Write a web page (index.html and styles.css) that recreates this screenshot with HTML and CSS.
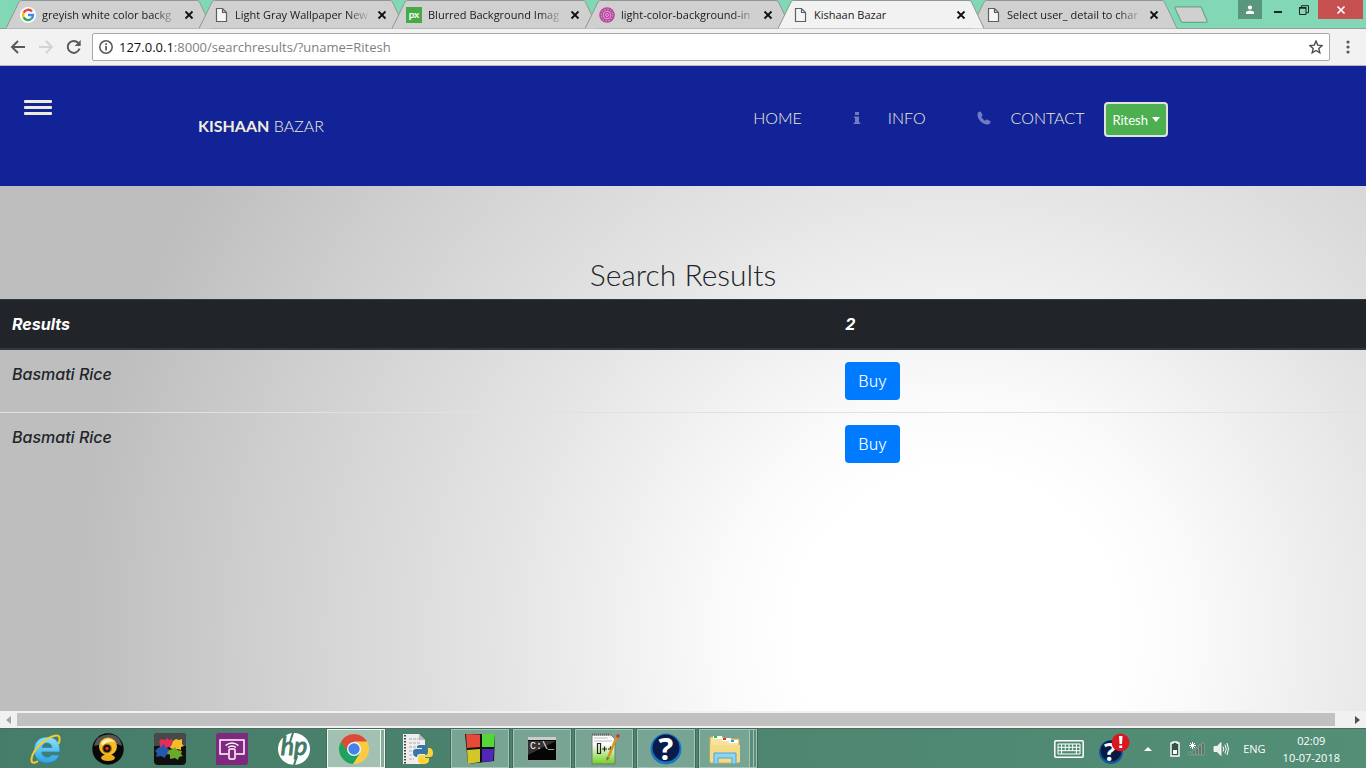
FILE: index.html
```html
<!DOCTYPE html>
<html lang="en">
<head>
<meta charset="utf-8">
<title>Kishaan Bazar</title>
<link rel="stylesheet" href="styles.css">
</head>
<body>
<svg class="defs" width="0" height="0" aria-hidden="true">
  <symbol id="tab-shape" viewBox="0 0 206 29"><path d="M0 28.5 13 2Q14 .5 15.500 .5H191Q192.500 .5 193.500 2L206 28.500" /></symbol>
  <symbol id="close" viewBox="0 0 10 10"><path d="m1.500 1.500 7 7m0-7-7 7" fill="none" stroke="currentColor" stroke-width="1.800"/></symbol>
  <symbol id="page" viewBox="0 0 16 16"><path d="M3.500 1.500h6l4 4v9h-10zM9.500 1.500v4h4" fill="#f5f5f5" stroke="#5f5f5f" stroke-width="1.200"/></symbol>
</svg>

<div class="tabstrip">
  <ul class="tabs">
    <li class="tab">
      <svg class="shape"><use href="#tab-shape"/></svg>
      <svg class="favicon" viewBox="0 0 16 16"><circle cx="8" cy="8" r="8" fill="#fff"/><g fill="none" stroke-width="2.400"><path d="M12 4.500A5 5 0 0 0 3.600 5.800" stroke="#ea4335"/><path d="M3.600 5.800a5 5 0 0 0 0 4.600" stroke="#fbbc05"/><path d="M3.600 10.400a5 5 0 0 0 7.600 1.500" stroke="#34a853"/><path d="M11.200 11.900A5 5 0 0 0 13 8H8" stroke="#4285f4"/></g></svg>
      <span class="title">greyish white color backg</span>
      <button class="close" aria-label="Close tab"><svg><use href="#close"/></svg></button>
    </li>
    <li class="tab">
      <svg class="shape"><use href="#tab-shape"/></svg>
      <svg class="favicon"><use href="#page"/></svg>
      <span class="title">Light Gray Wallpaper New</span>
      <button class="close" aria-label="Close tab"><svg><use href="#close"/></svg></button>
    </li>
    <li class="tab">
      <svg class="shape"><use href="#tab-shape"/></svg>
      <svg class="favicon" viewBox="0 0 16 16"><path fill="#48a947" d="M0 0h16v16H0z"/><text x="8" y="11" text-anchor="middle" class="px">px</text></svg>
      <span class="title">Blurred Background Imag</span>
      <button class="close" aria-label="Close tab"><svg><use href="#close"/></svg></button>
    </li>
    <li class="tab">
      <svg class="shape"><use href="#tab-shape"/></svg>
      <svg class="favicon" viewBox="0 0 16 16"><circle cx="8" cy="8" r="7.800" fill="#b8489f"/><g fill="none" stroke="#e9b9de"><circle cx="8" cy="8" r="5.800" stroke-dasharray="1.500 1.500" stroke-width=".8"/><circle cx="8" cy="8" r="3.800" stroke-width=".8"/><circle cx="8" cy="8" r="1.500" stroke-width=".8"/></g></svg>
      <span class="title">light-color-background-in</span>
      <button class="close" aria-label="Close tab"><svg><use href="#close"/></svg></button>
    </li>
    <li class="tab active">
      <svg class="shape"><use href="#tab-shape"/></svg>
      <svg class="favicon"><use href="#page"/></svg>
      <span class="title">Kishaan Bazar</span>
      <button class="close" aria-label="Close tab"><svg><use href="#close"/></svg></button>
    </li>
    <li class="tab">
      <svg class="shape"><use href="#tab-shape"/></svg>
      <svg class="favicon"><use href="#page"/></svg>
      <span class="title">Select user_ detail to char</span>
      <button class="close" aria-label="Close tab"><svg><use href="#close"/></svg></button>
    </li>
  </ul>
  <button class="newtab" aria-label="New tab"><svg width="36" height="18" viewBox="0 0 36 18"><path d="M3 .8h24q1 0 1.500 1l5.500 13q.5 1.500-1 1.500H9.500q-1 0-1.500-1L2 2Q1.500.8 3 .8z" fill="#d0d0d0" stroke="#6aa78c" stroke-width="1.200"/></svg></button>
  <div class="window-buttons">
    <button class="profile" aria-label="Profile"><svg width="10" height="10" viewBox="0 0 10 10"><circle cx="5" cy="2.500" r="2.100" fill="#fff"/><path d="M1 9V7q1-1.500 4-1.500T9 7v2z" fill="#fff"/></svg></button>
    <button class="minimize" aria-label="Minimize"><svg width="10" height="10" viewBox="0 0 10 10"><path d="M1 6h8v2H1z" fill="#222"/></svg></button>
    <button class="restore" aria-label="Restore"><svg width="10" height="10" viewBox="0 0 10 10"><path d="M.5 3h6.500v6.500H.5zM2.500 3V.7h7v7H7" fill="none" stroke="#222"/><path d="M0 2h7.500v1.500H0z" fill="#222"/></svg></button>
    <button class="quit" aria-label="Close"><svg width="10" height="10" viewBox="0 0 10 10"><path d="m1.500 1.500 7 7m0-7-7 7" stroke="#fff" stroke-width="1.700"/></svg></button>
  </div>
</div>

<div class="toolbar">
  <button aria-label="Back"><svg width="16" height="16" viewBox="0 0 16 16"><path d="M15 8H2.500M8 2 2 8l6 6" fill="none" stroke="#5a5a5a" stroke-width="2"/></svg></button>
  <button aria-label="Forward"><svg width="16" height="16" viewBox="0 0 16 16"><path d="M1 8h12.500M8 2l6 6-6 6" fill="none" stroke="#d3d3d3" stroke-width="2"/></svg></button>
  <button aria-label="Reload"><svg width="16" height="16" viewBox="0 0 16 16"><path d="M13.500 9.500A6 6 0 1 1 12.300 4" fill="none" stroke="#5a5a5a" stroke-width="2"/><path d="M14.700 1v6H8.700z" fill="#5a5a5a"/></svg></button>
  <div class="omnibox">
    <svg width="14" height="14" viewBox="0 0 14 14"><circle cx="7" cy="7" r="6.200" fill="none" stroke="#555" stroke-width="1.500"/><path d="M6.200 6h1.700v4.500H6.200zM6.200 3.200h1.700v1.700H6.200z" fill="#555"/></svg>
    <a class="url" href="#"><span class="host">127.0.0.1</span>:8000/searchresults/?uname=Ritesh</a>
    <button aria-label="Bookmark"><svg width="14" height="14" viewBox="0 0 14 14"><path d="m7 1 1.700 4.100 4.400.4-3.300 3 1 4.300L7 10.500l-3.800 2.300 1-4.300-3.300-3 4.400-.4z" fill="none" stroke="#4d4d4d" stroke-width="1.400"/></svg></button>
  </div>
  <button class="menu" aria-label="Menu"><svg width="4" height="14" viewBox="0 0 4 14"><g fill="#5a5a5a"><circle cx="2" cy="2" r="1.600"/><circle cx="2" cy="7" r="1.600"/><circle cx="2" cy="12" r="1.600"/></g></svg></button>
</div>

<div class="site">
  <header class="site-header">
    <button class="burger" aria-label="Open navigation"><span></span><span></span><span></span></button>
    <a class="brand" href="#"><b>KISHAAN</b> BAZAR</a>
    <nav class="nav">
      <a class="home" href="#">HOME</a>
      <a class="info" href="#"><svg width="8" height="14" viewBox="0 0 8 14"><path d="M2 1h4v3H2zM1 5.500h5v6h1.300V13H.7v-1.500H2V7H1z"/></svg>INFO</a>
      <a class="contact" href="#"><svg width="14" height="14" viewBox="0 0 14 14"><path d="M3.700.5 5.700 4.300 4.300 6q1.500 2.500 3.700 3.700l1.700-1.400 3.800 2Q13.500 13.600 10.300 13.500C5 13 .7 8.500.5 3.700Q.5.600 3.700.5z"/></svg>CONTACT</a>
      <button class="user">Ritesh <svg width="8" height="5" viewBox="0 0 8 5"><path d="M0 0h8L4 5z" fill="#fff"/></svg></button>
    </nav>
  </header>
  <main class="content">
    <h1>Search Results</h1>
    <table class="results">
      <thead><tr><th scope="col">Results</th><th scope="col">2</th></tr></thead>
      <tbody>
        <tr><td>Basmati Rice</td><td><button class="buy">Buy</button></td></tr>
        <tr><td>Basmati Rice</td><td><button class="buy">Buy</button></td></tr>
      </tbody>
    </table>
  </main>
</div>

<div class="scrollbar">
  <button aria-label="Scroll left"><svg width="5" height="8" viewBox="0 0 5 8"><path d="M5 0v8L0 4z" fill="#a3a3a3"/></svg></button>
  <div class="thumb"></div>
  <button aria-label="Scroll right"><svg width="5" height="8" viewBox="0 0 5 8"><path d="M0 0v8l5-4z" fill="#505050"/></svg></button>
</div>

<footer class="taskbar">
  <div class="apps">
    <button aria-label="Internet Explorer"><svg viewBox="0 0 32 32">
      <defs><linearGradient id="ie" x2="0" y2="1"><stop stop-color="#8fe3fb"/><stop offset="1" stop-color="#2ba3e2"/></linearGradient></defs>
      <path d="M17 4C8.500 4 4 10 4 17s5 13 13 13c6 0 10.500-3 12-8h-7.500c-1 1.500-2.500 2.200-4.500 2.200-3.200 0-5-2-5.200-5.200h18C30.500 9 25.500 4 17 4zm-5 10.500c.5-3 2.300-4.500 5-4.500s4.500 1.500 5 4.500z" fill="url(#ie)" stroke="#2384bd" stroke-width=".7"/>
      <path d="M28.500 11c2-5 1.500-9-2.500-8.500C16 4 3 16 1.500 26c-.5 4.500 3 4.500 6.500 2" fill="none" stroke="#f6cc2b" stroke-width="2"/></svg></button>
    <button aria-label="Webcam"><svg viewBox="0 0 32 32"><circle cx="16" cy="16" r="15.700" fill="#080808"/><path d="M2 13Q4 2 16 1.500T30 13Q22 8 2 13z" fill="#555"/><path d="M9 25q0-2 3-3h8q3 1 3 3-1 3-7 3t-7-3z" fill="#efad17"/><circle cx="16" cy="13.500" r="9" fill="#f6bd28"/><path d="M9 10q6-8 14-1-7-2-12 5z" fill="#fff0a8"/><circle cx="15" cy="15.500" r="5" fill="#a47a18"/><circle cx="15" cy="15.500" r="3.700" fill="#111"/><circle cx="15" cy="15.500" r="1.700" fill="#ff2c16"/></svg></button>
    <button aria-label="Puzzle"><svg viewBox="0 0 32 32"><rect width="32" height="32" rx="4" fill="#101010"/><path d="M0 13V4q0-4 4-4h24q4 0 4 4v9z" fill="#484848"/><path d="m7 6 4 1 2-2 2 2 3-1 1 4-2 1 1 4-4-1-2 2-2-2-4 1V11L5 9z" fill="#e52d58"/><path d="m19 8 3-2 3 1 3-1v5l2 2-3 1v3l-4-1-2 2-2-2-3-1 2-4z" fill="#f3bc28"/><path d="m4 15 4-2 2-2 2 4 3 1-1 3 2 2-4 1-1 3-4-2-5 1 1-4-2-2z" fill="#2657ad"/><path d="m15 17 4-1 2-2 2 3 5 1-1 3 2 2-4 1-1 3-3-2-5 1v-4l-3-2z" fill="#69aa2b"/></svg></button>
    <button aria-label="Cast"><svg viewBox="0 0 32 32"><path d="M3 0h29v29q0 3-3 3H0V3q0-3 3-3z" fill="#80277f"/><g fill="none" stroke="#fff" stroke-width="1.500"><path d="M12 21H4V7h24v14h-8"/><rect x="13" y="16" width="6" height="10" rx="1"/><path d="M9.500 12.500q6.500-5 13 0M12 14.500q4-3 8 0"/></g></svg></button>
    <button aria-label="HP"><svg viewBox="0 0 32 32"><circle cx="16" cy="16" r="16" fill="#fff"/><text x="16" y="22" text-anchor="middle" class="hp">hp</text><path d="m15 0-3 9M16 32l3-9" stroke="#417b68" stroke-width="2"/></svg></button>
    <button class="open current" aria-label="Chrome"><svg viewBox="0 0 32 32"><circle cx="16" cy="16" r="15" fill="#fbcc43"/><path d="M3 8.500a15 15 0 0 1 26 0H16L9 19z" fill="#d94b3c"/><path d="M3 8.500A15 15 0 0 0 15 31l7-11-12-1z" fill="#1ca261"/><circle cx="16" cy="16" r="7" fill="#f8f8f8"/><circle cx="16" cy="16" r="5.700" fill="#4283eb"/></svg></button>
    <button aria-label="Python"><svg viewBox="0 0 32 32"><path d="M1 1h16l6 6v24H1z" fill="#eee"/><path d="M17 1v6h6z" fill="#bbb"/><path d="M3 2v29" stroke="#444" stroke-width="2" stroke-dasharray="1.500 1.500"/><path d="M7 6h10M7 10h12M7 14h10M7 18h5M7 22h5M7 26h5" stroke="#aaa" stroke-dasharray="3 1"/><path d="M17 12h5q3 0 3 3v4q0 2-3 2h-4q-3 0-3 3h-1q-3-1-3-5 0-3 3-3h6v-1h-5v-2z" fill="#3776ab"/><path d="M26 15h2q3 1 3 5 0 4-3 4h-6v1h5v3q-1 3-5 3-6 0-6-3v-3q0-3 3-3h4q3 0 3-3z" fill="#ffd43b"/></svg></button>
    <button class="open" aria-label="Color blocks"><svg viewBox="0 0 32 32"><path d="m1 1 30 0-1 27-26 3z" fill="#111"/><path d="m2 1 14 .5V14L3 15z" fill="#e54a3a"/><path d="M18 1h13l-1 13H18z" fill="#55d638"/><path d="m3 17 13-1v13L4 31z" fill="#d2c72a"/><path d="M18 16h12l-1 12-11 1z" fill="#5127ba"/></svg></button>
    <button class="open" aria-label="Command Prompt"><svg viewBox="0 0 32 32"><path d="M1.500 4.500h29v23h-29z" fill="#050505" stroke="#999"/><path d="M2 4h28v3H2z" fill="#ccc"/><path d="M2 8h28L2 22z" fill="#333"/><text x="4" y="16" class="cmd">C:\_</text></svg></button>
    <button class="open" aria-label="Notepad++"><svg viewBox="0 0 32 32"><defs><linearGradient id="np" x2="0" y2="1"><stop offset=".3" stop-color="#fff"/><stop offset="1" stop-color="#72cf22"/></linearGradient></defs><path d="M4 2h19l4 4v25H4z" fill="url(#np)" stroke="#777"/><path d="M6 5h14M6 8h18" stroke="#bbb"/><path d="M4 1.500h18" stroke="#666" stroke-width="2" stroke-dasharray="1 1"/><path d="M9.500 10.500h3v10h-3zM14 16h5m-2.500-2.500v5m3.500-2.500h5m-2.500-2.500v5" fill="none" stroke="#222" stroke-width="1.200"/><path d="m29 3-9 22" stroke="#d89522" stroke-width="2.500"/><path d="m29 1 3 1-1 3-3-1z" fill="#c33"/><path d="m18.500 24 3 1-3 3z" fill="#864"/></svg></button>
    <button class="open" aria-label="Help"><svg viewBox="0 0 32 32"><circle cx="16" cy="16" r="15.500" fill="#1676c6"/><circle cx="16" cy="15" r="13.500" fill="#081b49"/><text x="16" y="27" text-anchor="middle" class="question">?</text></svg></button>
    <button class="open stack" aria-label="File Explorer"><svg viewBox="0 0 32 32"><path d="M1 4h13l2 2h14v24H1z" fill="#f8e39c" stroke="#d1ab4e"/><path d="M4 3h9v3H4zM13 5h9v3h-9zM20 7h9v3h-9z" fill="#fff"/><path d="M5 3h3v2H5z" fill="#2c3"/><path d="M14 5h3v2h-3z" fill="#d33"/><path d="M22 7h3v2h-3z" fill="#29e"/><path d="M1 12h30v17H1z" fill="#f5db85"/><path d="M5 31V20h22v11h-4v-6H9v6z" fill="#8fd2f1" stroke="#4aa7d5"/></svg></button>
  </div>
  <div class="tray">
    <svg width="30" height="18" viewBox="0 0 30 18"><rect x=".8" y=".8" width="28.400" height="16.400" rx="1" fill="none" stroke="#fff" stroke-width="1.500"/><path d="M4 4h22v10H4zM4 7.300h22M4 10.700h22M7.600 4v10M11.300 4v6.700M15 4v6.700M18.700 4v6.700M22.400 4v10" fill="none" stroke="#fff"/></svg>
    <svg width="32" height="32" viewBox="0 0 32 32"><circle cx="13" cy="19" r="12" fill="#14599f"/><circle cx="13" cy="18" r="10.500" fill="#071b43"/><text x="12" y="28" text-anchor="middle" class="help-small">?</text><circle cx="22.500" cy="9.500" r="9" fill="#d91820"/><path d="M21 3h3.500l-.5 8h-2.500zM21.200 12.500h3V15h-3z" fill="#fff"/></svg>
    <svg width="8" height="4" viewBox="0 0 8 4"><path d="m4 0 4 4H0z" fill="#fff"/></svg>
    <div class="status">
      <svg width="10" height="16" viewBox="0 0 10 16"><path d="M3 2V1h4v1h2v13H1V2z" fill="#315649" stroke="#fff" stroke-width="1.400"/><path d="M3 9h4v4H3z" fill="#fff"/></svg>
      <svg width="17" height="15" viewBox="0 0 17 15"><path d="M1 14v-3h2v3zm4 0V9h2v5zm3 0V7h2v7zm3 0V4h2v10zm3 0V2h2v12z" fill="#44594f" stroke="#b9c9c0" stroke-width=".5"/><path d="M4.500 1v7M1 4.500h7M2 2l5 5m0-5L2 7" stroke="#fff"/></svg>
      <svg width="16" height="16" viewBox="0 0 16 16"><path d="M1 5.500h3l4-4v13l-4-4H1z" fill="#e8f0ec" stroke="#fff" stroke-width=".8"/><path d="M10 5.500q1.500 2.500 0 5M12 3.500q2.500 4.500 0 9M14 2q3 6 0 12" fill="none" stroke="#fff"/></svg>
    </div>
    <span>ENG</span>
    <time class="clock" datetime="2018-07-10T02:09">02:09<br>10-07-2018</time>
  </div>
</footer>
</body>
</html>
```
FILE: styles.css
```css
* { box-sizing: border-box; }

body {
  margin: 0;
  min-height: 100vh;
  display: flex;
  flex-direction: column;
  font-family: "Open Sans", "Noto Sans", sans-serif;
}

button {
  margin: 0;
  padding: 0;
  border: 0;
  background: none;
  font: inherit;
  color: inherit;
  cursor: pointer;
}

a { text-decoration: none; }
svg { display: block; flex: none; }
.defs { position: absolute; }

/* Tab strip */
.tabstrip {
  display: flex;
  height: 29px;
  padding-left: 6px;
  background: #82d8b5;
  border-bottom: 1px solid #969e9a;
}

.tabs {
  display: flex;
  margin: 0;
  padding: 0;
  list-style: none;
}

.tab {
  position: relative;
  display: flex;
  align-items: center;
  gap: 6px;
  width: 206px;
  height: 29px;
  margin-right: -13px;
  padding: 0 18px 0 14px;
  font-size: 11px;
}

.tab .shape {
  position: absolute;
  inset: 0;
  z-index: -1;
  width: 206px;
  height: 29px;
  fill: #d0d0d0;
  stroke: #8e9994;
}

.tab, .tabstrip { isolation: isolate; }
.tab.active { z-index: 1; }
.tab.active .shape { fill: #f2f2f2; }
.favicon { width: 16px; height: 16px; }

.title {
  flex: 1;
  white-space: nowrap;
  line-height: 20px;
  color: #1a1a1a;
  mask-image: linear-gradient(to right, #000 82%, transparent);
}

.tab.active .title { mask-image: none; }
.close { color: #111; }
.close svg { width: 10px; height: 10px; }
.px { font: bold 10px Lato, sans-serif; fill: #fff; }
.newtab { align-self: flex-start; margin: 6px 0 0 9px; }

.window-buttons {
  display: flex;
  height: 19px;
  margin-left: auto;
  padding-right: 3px;
}

.window-buttons button {
  display: grid;
  place-items: center;
  width: 28px;
}

.window-buttons .profile { width: 24px; background: #5a967d; }
.window-buttons .minimize { width: 32px; }
.window-buttons .restore { width: 24px; padding-right: 4px; }
.window-buttons .quit { width: 45px; background: #c75050; }

/* Address bar */
.toolbar {
  display: flex;
  align-items: center;
  gap: 12px;
  height: 37px;
  padding: 0 16px 0 10px;
  background: #f2f2f2;
  border-bottom: 1px solid #b6b6b6;
}

.omnibox {
  flex: 1;
  display: flex;
  align-items: center;
  gap: 6px;
  height: 28px;
  margin-left: -2px;
  padding: 0 6px;
  background: #fff;
  border: 1px solid #a9a9a9;
  border-radius: 2px;
}

.url { flex: 1; font-size: 13px; color: #808080; }
.host { color: #111; }
.menu { margin-left: 4px; }

/* Site */
.site {
  flex: 1;
  display: flex;
  flex-direction: column;
  font-family: Lato, "Open Sans", sans-serif;
  font-size: 16px;
  line-height: 24px;
  color: #212529;
}

.site-header {
  display: flex;
  align-items: flex-start;
  height: 120px;
  padding: 34px 198px 0 24px;
  background: #112396;
  color: #f2eedc;
}

.burger { display: grid; gap: 3px; width: 28px; }
.burger span { height: 3px; border-radius: 1px; background: #eeebd8; }

.brand {
  margin: 14px auto 0 146px;
  font-weight: 300;
  color: inherit;
}

.brand b { font-weight: 700; }

.nav { display: flex; align-items: flex-start; margin-top: 2px; }

.nav a {
  display: flex;
  align-items: center;
  padding-top: 4px;
  color: inherit;
  font-weight: 300;
}

.nav a svg { fill: #717bc2; }
.info { gap: 27px; margin-left: 51px; }
.contact { gap: 20px; margin-left: 51px; }

.user {
  display: flex;
  align-items: center;
  gap: 4px;
  height: 35px;
  margin-left: 20px;
  padding: 0 6px;
  border: 2px solid #dfe3dc;
  border-radius: 4px;
  background: #4caf50;
  color: #fff;
  font-size: 13px;
}

.content {
  flex: 1;
  padding-top: 71px;
  background: radial-gradient(circle at 70% 85%, #fff 160px, #fafafa 240px, #e4e4e4 460px, #cfcfcf 700px, #bebebe 880px);
}

h1 {
  margin: 0 0 8px;
  font-size: 30px;
  font-weight: 300;
  line-height: 34px;
  text-align: center;
}

.results {
  width: 100%;
  border-collapse: collapse;
  table-layout: fixed;
  text-align: left;
  font-family: Inter, "Open Sans", sans-serif;
}

.results th,
.results td {
  padding: 12px;
  vertical-align: top;
  border-top: 1px solid #dee2e6;
  font-style: italic;
}

.results th:first-child { width: 61%; }
.results td { font-weight: 500; }

.results th {
  background: #212529;
  color: #fff;
  border-top: 1px solid #32383e;
  border-bottom: 2px solid #32383e;
}

.buy {
  display: block;
  height: 38px;
  padding: 0 13px;
  border-radius: 4px;
  background: #007bff;
  color: #fff;
  font-style: normal;
  font-weight: 300;
}

/* Horizontal scrollbar */
.scrollbar { display: flex; height: 17px; padding: 2px 0; background: #f1f1f1; }
.scrollbar button { display: grid; place-items: center; width: 17px; }
.scrollbar .thumb { flex: 1; margin-right: 14px; background: #c1c1c1; }

/* Taskbar */
.taskbar {
  display: flex;
  justify-content: space-between;
  height: 40px;
  padding: 0 26px 0 17px;
  background: linear-gradient(to right, #467d6a, #4d846f 50%, #538f77);
  border-top: 1px solid #52695f;
  color: #fff;
}

.apps { display: flex; gap: 4px; }
.apps button { display: grid; place-items: center; width: 58px; }
.apps svg { width: 32px; height: 32px; }

.apps .open {
  border: 1px solid #a5c3b5;
  background: #78a593;
  box-shadow: 0 0 0 1px #3d6c5b;
}

.apps .current {
  padding-right: 4px;
  border-color: #f0f5f2;
  background: linear-gradient(to right, #a3c1b3 52px, #f0f5f2 52px 53px, #8aab9c 53px);
}

.apps .stack {
  padding-right: 6px;
  background: linear-gradient(to right, #78a593 49px, #a5c3b5 49px 50px, #5b8f7b 50px 53px, #a5c3b5 53px 54px, #5b8f7b 54px);
}

.hp { font: italic 25px Lato, sans-serif; fill: #417b68; stroke: #417b68; }
.cmd { font: 10px "Liberation Mono", monospace; fill: #fff; }
.question { font: bold 31px "Open Sans", sans-serif; fill: #fff; }
.help-small { font: bold 25px "Open Sans", sans-serif; fill: #fff; }

.tray { display: flex; align-items: center; gap: 14px; font-size: 11px; }
.status { display: flex; align-items: center; gap: 8px; margin-left: 4px; }
.clock { margin-left: 3px; line-height: 17px; text-align: center; }
```
